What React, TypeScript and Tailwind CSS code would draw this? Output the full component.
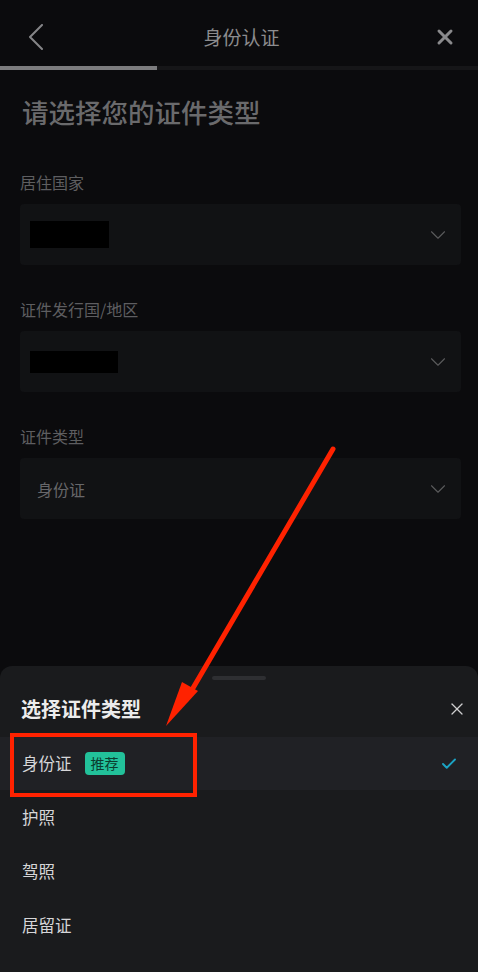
import { ChevronDown, X, Check } from "lucide-react";

const font = { fontFamily: '"Noto Sans CJK SC", "Noto Sans", sans-serif' };

interface SelectFieldProps {
  label: string;
  value?: string;
  maskClass?: string;
}

const SelectField = ({ label, value, maskClass }: SelectFieldProps) => (
  <div className="flex flex-col">
    <div className="text-[16px] leading-[22px] text-[#5e5e60] mb-[11px]">{label}</div>
    <div className="h-[61px] rounded-[4px] bg-[#111214] flex items-center justify-between pl-[10px] pr-[10px]">
      {value ? (
        <span className="pl-[7px] text-[16px] text-[#67676a]">{value}</span>
      ) : (
        <span className={`bg-black ${maskClass}`} />
      )}
      <ChevronDown className="w-[26px] h-[26px] text-[#5a5a5c]" strokeWidth={1} />
    </div>
  </div>
);

const options = ["护照", "驾照", "居留证"];

export default function App() {
  return (
    <div style={font} className="relative w-[478px] h-[972px] overflow-hidden bg-[#0b0b0d] flex flex-col">
      {/* header */}
      <div className="h-[66px] flex items-center justify-between pt-[8px] pl-[28px] pr-[21px]">
        <svg width="16" height="26" viewBox="0 0 16 26" className="text-[#858588]">
          <polyline points="14,1 2,13 14,25" fill="none" stroke="currentColor" strokeWidth="2" strokeLinecap="round" strokeLinejoin="round" />
        </svg>
        <h1 className="text-[19px] text-[#8c8c8e] pl-[6px]">身份认证</h1>
        <X className="w-[24px] h-[24px] text-[#8a8a8c]" strokeWidth={3} />
      </div>
      <div className="h-[4px] bg-[#161618] flex">
        <div className="w-[157px] h-full bg-[#7c7c7e]" />
      </div>

      <div className="pl-[20px] pr-[17px] pt-[24px] flex flex-col">
        <h2 className="text-[26.5px] leading-[36px] font-medium text-[#6a6a6c] pl-[2px] mb-[41px]">请选择您的证件类型</h2>
        <div className="flex flex-col gap-[33px]">
          <SelectField label="居住国家" maskClass="w-[79px] h-[27px]" />
          <SelectField label="证件发行国/地区" maskClass="w-[88px] h-[22px]" />
          <SelectField label="证件类型" value="身份证" />
        </div>
      </div>

      {/* bottom sheet */}
      <div className="mt-auto h-[306px] rounded-t-[12px] bg-[#1a1b1d] flex flex-col">
        <div className="flex justify-center pt-[10px]">
          <div className="w-[54px] h-[4px] rounded-full bg-[#2e2f32]" />
        </div>
        <div className="h-[57px] flex items-center justify-between pl-[21px] pr-[11px]">
          <span className="text-[20px] font-bold text-[#ececec]">选择证件类型</span>
          <X className="w-[20px] h-[20px] text-[#cfcfd1]" strokeWidth={1.5} />
        </div>
        <div className="h-[53px] bg-[#202125] flex items-center justify-between pl-[22px] pr-[20px]">
          <div className="flex items-center gap-[13px]">
            <span className="text-[16.5px] text-[#d6d6d8]">身份证</span>
            <span className="h-[23px] px-[6px] rounded-[4px] bg-[#22c19a] text-[14px] leading-[23px] text-[#0b3c2f]">推荐</span>
          </div>
          <Check className="w-[18px] h-[18px] text-[#1ba3c4]" strokeWidth={2.5} />
        </div>
        {options.map((o) => (
          <div key={o} className="h-[54px] flex items-center pl-[22px] text-[16.5px] text-[#d6d6d8]">
            {o}
          </div>
        ))}
      </div>

      {/* annotation */}
      <div className="absolute left-[10px] top-[733px] w-[187px] h-[64px] border-[4px] border-[#ff2200]" />
      <svg className="absolute left-0 top-0 pointer-events-none" width="478" height="972">
        <line x1="333" y1="449" x2="186" y2="700" stroke="#ff2200" strokeWidth="5" strokeLinecap="round" />
        <polygon points="166,726 182,682 198,691" fill="#ff2200" />
      </svg>
    </div>
  );
}
